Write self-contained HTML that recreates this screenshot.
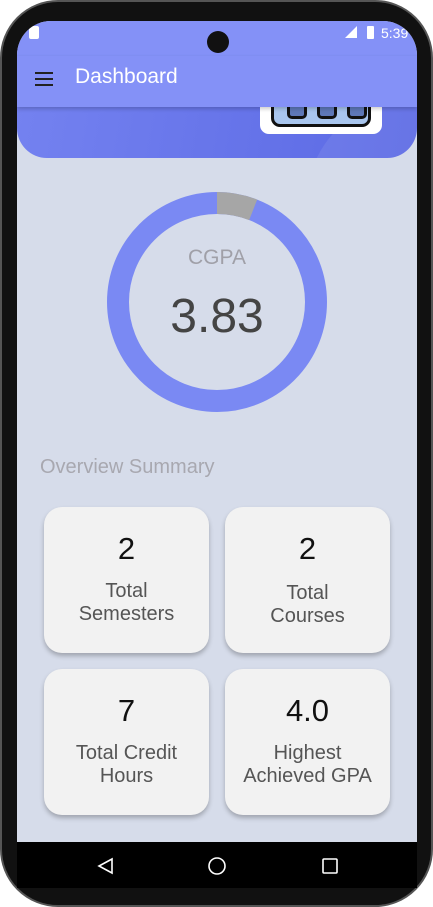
<!DOCTYPE html>
<html><head><meta charset="utf-8"><style>
*{margin:0;padding:0;box-sizing:border-box}
body{width:433px;height:907px;background:#fff;font-family:"Liberation Sans",sans-serif;position:relative;overflow:hidden}
.phone{position:absolute;left:0;top:0;width:433px;height:907px;background:#111;border-radius:58px;border:2px solid #555}
.screen{position:absolute;left:17px;top:21px;width:400px;height:867px;background:#d6dcea;overflow:hidden;border-radius:34px 34px 0 0}
.status{position:absolute;left:0;top:0;width:400px;height:35px;background:#8491f7}
.appbar{position:absolute;left:0;top:35px;width:400px;height:51px;background:#8491f7;box-shadow:0 2px 4px rgba(0,0,0,.2);z-index:2}
.header{position:absolute;left:0;top:60px;width:400px;height:77px;background:linear-gradient(100deg,#7482f0,#5b69e4);border-radius:0 0 30px 30px;overflow:hidden}
.card{position:absolute;width:165px;height:146px;background:#f2f2f2;border-radius:18px;box-shadow:0 3px 5px rgba(0,0,0,.25);text-align:center;color:#555}
.card .n{font-size:31px;color:#111;margin-top:25px;line-height:34px}
.card .t{font-size:20px;line-height:23px;margin-top:14px}
.nav{position:absolute;left:0;top:821px;width:400px;height:46px;background:#000}
</style></head><body>
<div class="phone"></div>
<div class="screen">
<div class="header"><div style="position:absolute;left:290px;top:20px;width:200px;height:200px;border-radius:50%;background:rgba(255,255,255,.08)"></div><div style="position:absolute;left:243px;top:12px;width:122px;height:41px;background:#fff;border-radius:9px"></div><div style="position:absolute;left:254px;top:12px;width:100px;height:34px;background:#a9c6ee;border:3px solid #111;border-radius:9px"></div><div style="position:absolute;left:270px;top:18px;width:20px;height:20px;background:#5e78b8;border:3px solid #111;border-radius:5px"></div><div style="position:absolute;left:300px;top:18px;width:20px;height:20px;background:#5e78b8;border:3px solid #111;border-radius:5px"></div><div style="position:absolute;left:330px;top:18px;width:20px;height:20px;background:#5e78b8;border:3px solid #111;border-radius:5px"></div></div>
<div class="status">
<div style="position:absolute;left:12px;top:5px;width:10px;height:13px;background:#fff;border-radius:2px"></div>
<div style="position:absolute;left:190px;top:10px;width:22px;height:22px;border-radius:50%;background:#111"></div>
<div style="position:absolute;left:328px;top:5px;width:0;height:0;border-left:12px solid transparent;border-bottom:12px solid #fff"></div>
<div style="position:absolute;left:350px;top:5px;width:7px;height:13px;background:#fff;border-radius:1px"></div>
<div style="position:absolute;left:364px;top:4px;color:#fff;font-size:14px">5:39</div>
</div>
<div class="appbar">
<div style="position:absolute;left:18px;top:33px;width:18px;height:2px;background:#222;box-shadow:0 -6px 0 #222,0 -12px 0 #222;top:34px;transform:translateY(-6px)"></div>
<div style="position:absolute;left:58px;top:9px;color:#fff;font-size:21px">Dashboard</div>
</div>
<svg style="position:absolute;left:0;top:0" width="400" height="420">
<circle cx="200" cy="281" r="99" fill="none" stroke="#7a89f3" stroke-width="22"/>
<circle cx="200" cy="281" r="99" fill="none" stroke="#a6a6a6" stroke-width="22" stroke-dasharray="37 700" transform="rotate(-90 200 281)"/>
<text x="200" y="243" text-anchor="middle" font-family="Liberation Sans" font-size="21" fill="#a0a0a8">CGPA</text>
<text x="200" y="311" text-anchor="middle" font-family="Liberation Sans" font-size="48" fill="#444">3.83</text>
</svg>
<div style="position:absolute;left:23px;top:435px;font-size:20px;color:#a8a8b0">Overview Summary</div>
<div class="card" style="left:27px;top:486px"><div class="n">2</div><div class="t">Total<br>Semesters</div></div>
<div class="card" style="left:208px;top:486px"><div class="n">2</div><div class="t" style="margin-top:16px">Total<br>Courses</div></div>
<div class="card" style="left:27px;top:648px"><div class="n">7</div><div class="t">Total Credit<br>Hours</div></div>
<div class="card" style="left:208px;top:648px"><div class="n">4.0</div><div class="t">Highest<br>Achieved GPA</div></div>
<div class="nav">
<svg width="400" height="46"><path d="M95 17 L82 24 L95 31 Z" fill="none" stroke="#fff" stroke-width="1.6"/><circle cx="200" cy="24" r="8" fill="none" stroke="#fff" stroke-width="1.6"/><rect x="306" y="17" width="14" height="14" rx="1" fill="none" stroke="#fff" stroke-width="1.6"/></svg>
</div>
</div>
</body></html>
